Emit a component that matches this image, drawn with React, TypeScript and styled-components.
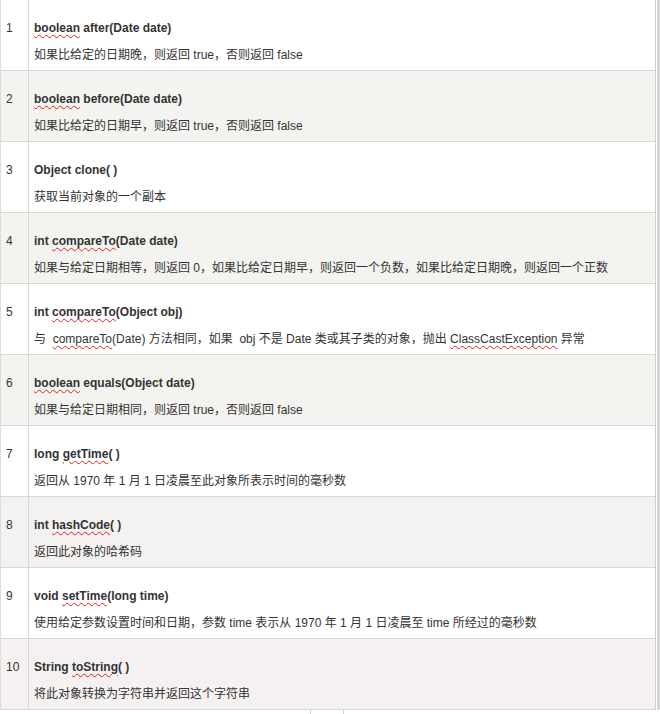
import React from 'react';
import styled, { createGlobalStyle } from 'styled-components';

const GlobalStyle = createGlobalStyle`
  html, body {
    margin: 0;
    padding: 0;
    background: #ffffff;
  }
  body {
    font-family: "Liberation Sans", Arial, "Noto Sans CJK SC", sans-serif;
    color: #333333;
  }
`;

const Page = styled.div`
  width: 660px;
  height: 714px;
  overflow: hidden;
  display: flex;
  flex-direction: column;
`;

const Frame = styled.div`
  display: flex;
`;

const Table = styled.div`
  width: 657px;
  border-right: 1px solid #cfcfcf;
  border-left: 1px solid #dcdcdc;
  box-sizing: border-box;
`;

const Edge = styled.div`
  width: 3px;
  margin-left: 1px;
  background: #d6d6d6;
`;

const Row = styled.div<{ shade?: string }>`
  display: grid;
  grid-template-columns: 28px 1fr;
  height: 71px;
  box-sizing: border-box;
  border-bottom: 1px solid #d6d6d6;
  background: ${({ shade }) => shade || '#ffffff'};
`;

const NumCell = styled.div`
  border-right: 1px solid #d8d8d8;
  padding: 19px 0 0 5px;
  font-size: 12px;
  line-height: 18px;
`;

const Body = styled.div`
  padding: 19px 0 0 5px;
  display: flex;
  flex-direction: column;
  gap: 9px;
`;

const Title = styled.div`
  font-size: 12px;
  line-height: 18px;
  font-weight: bold;
  white-space: nowrap;
`;

const Desc = styled.div`
  font-size: 12px;
  line-height: 18px;
  white-space: nowrap;
`;

const Wavy = styled.span`
  text-decoration: underline wavy #e02020;
  text-decoration-thickness: 1px;
  text-underline-offset: 2px;
`;

const Footer = styled.div`
  height: 4px;
  display: flex;
  padding-left: 310px;
`;

const Tab = styled.div`
  width: 32px;
  border-left: 1px solid #d0d0d0;
  border-right: 1px solid #d0d0d0;
`;

type Item = { title: React.ReactNode; desc: React.ReactNode; shade?: string };

const items: Item[] = [
  {
    title: <><Wavy>boolean</Wavy> after(Date date)</>,
    desc: '如果比给定的日期晚，则返回 true，否则返回 false',
  },
  {
    title: <><Wavy>boolean</Wavy> before(Date date)</>,
    desc: '如果比给定的日期早，则返回 true，否则返回 false',
    shade: '#f3f3f0',
  },
  {
    title: 'Object clone( )',
    desc: '获取当前对象的一个副本',
  },
  {
    title: <>int <Wavy>compareTo</Wavy>(Date date)</>,
    desc: '如果与给定日期相等，则返回 0，如果比给定日期早，则返回一个负数，如果比给定日期晚，则返回一个正数',
    shade: '#f3f3f0',
  },
  {
    title: <>int <Wavy>compareTo</Wavy>(Object obj)</>,
    desc: <>与&nbsp; <Wavy>compareTo</Wavy>(Date) 方法相同，如果&nbsp; obj 不是 Date 类或其子类的对象，抛出 <Wavy>ClassCastException</Wavy> 异常</>,
  },
  {
    title: <><Wavy>boolean</Wavy> equals(Object date)</>,
    desc: '如果与给定日期相同，则返回 true，否则返回 false',
    shade: '#f3f3f0',
  },
  {
    title: <>long <Wavy>getTime</Wavy>( )</>,
    desc: '返回从 1970 年 1 月 1 日凌晨至此对象所表示时间的毫秒数',
  },
  {
    title: <>int <Wavy>hashCode</Wavy>( )</>,
    desc: '返回此对象的哈希码',
    shade: '#f3f2f0',
  },
  {
    title: <>void <Wavy>setTime</Wavy>(long time)</>,
    desc: '使用给定参数设置时间和日期，参数 time 表示从 1970 年 1 月 1 日凌晨至 time 所经过的毫秒数',
  },
  {
    title: <>String <Wavy>toString</Wavy>( )</>,
    desc: '将此对象转换为字符串并返回这个字符串',
    shade: '#f4f1f0',
  },
];

const App: React.FC = () => {
  return (
    <>
      <GlobalStyle />
      <Page>
        <Frame>
          <Table>
            {items.map((item, i) => (
              <Row key={i} shade={item.shade}>
                <NumCell>{i + 1}</NumCell>
                <Body>
                  <Title>{item.title}</Title>
                  <Desc>{item.desc}</Desc>
                </Body>
              </Row>
            ))}
          </Table>
          <Edge />
        </Frame>
        <Footer>
          <Tab />
        </Footer>
      </Page>
    </>
  );
};

export default App;
